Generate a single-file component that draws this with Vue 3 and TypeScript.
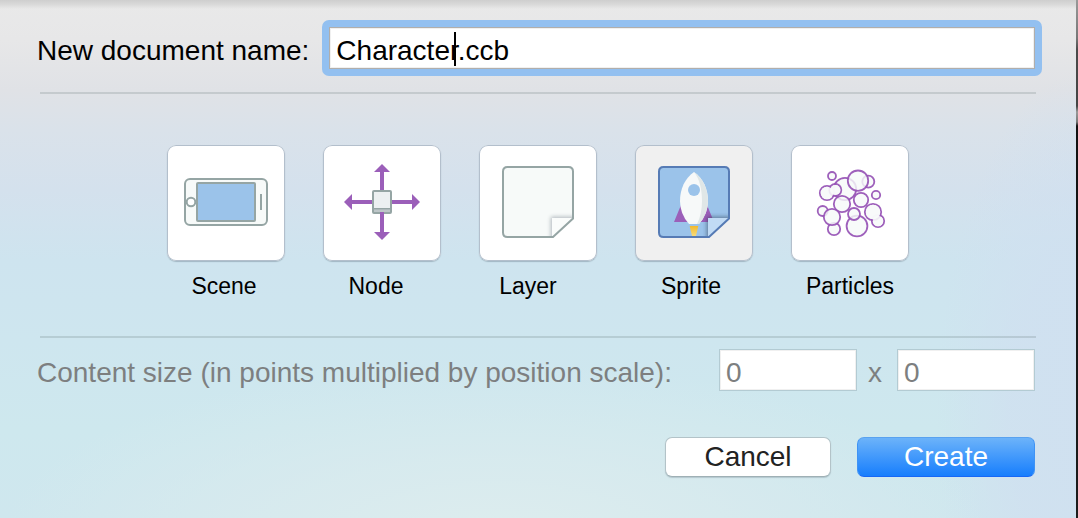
<script setup lang="ts">
import { ref } from 'vue'

interface Bubble {
  x: number
  y: number
  r: number
}

const kinds = ['Scene', 'Node', 'Layer', 'Sprite', 'Particles']
const selected = ref('Sprite')
const docName = ref('Character.ccb')
const width = ref('0')
const height = ref('0')

const bubbles: Bubble[] = [
  { x: 48, y: 36, r: 4 },
  { x: 61, y: 49, r: 11.2 },
  { x: 84.3, y: 41.7, r: 6 },
  { x: 74, y: 40.7, r: 10.2 },
  { x: 92, y: 55, r: 4.2 },
  { x: 43, y: 53, r: 7.2 },
  { x: 51.3, y: 50, r: 6 },
  { x: 77, y: 60, r: 7.2 },
  { x: 58, y: 64, r: 8.2 },
  { x: 38.7, y: 71, r: 5 },
  { x: 50, y: 89, r: 6.2 },
  { x: 48, y: 77, r: 8.2 },
  { x: 73, y: 86, r: 10.4 },
  { x: 70, y: 74, r: 6 },
  { x: 94, y: 81, r: 6.2 },
  { x: 89, y: 72, r: 8.2 },
]
const merged: Bubble[] = [
  { x: 43, y: 53, r: 6.3 },
  { x: 51.3, y: 50, r: 5.1 },
  { x: 94, y: 81, r: 5.2 },
  { x: 89, y: 72, r: 7.2 },
]
</script>

<template>
  <div class="window">
    <form class="sheet" @submit.prevent>
      <div class="row name-row">
        <label for="doc-name">New document name:</label>
        <div class="name-field">
          <input id="doc-name" v-model="docName" type="text" spellcheck="false" />
          <span class="caret"></span>
        </div>
      </div>

      <hr />

      <div class="tiles" role="radiogroup" aria-label="Document type">
        <div v-for="kind in kinds" :key="kind" class="tile" :class="{ active: selected === kind }">
          <input :id="'kind-' + kind" v-model="selected" type="radio" name="kind" :value="kind" />
          <svg viewBox="7 5 118 117" aria-hidden="true">
            <g v-if="kind === 'Scene'" stroke="#95a5a4" stroke-width="2">
              <rect x="25" y="39" width="82" height="46" rx="5" fill="#f7faf9" />
              <rect x="37" y="43" width="58" height="38" rx="1" fill="#9bc3ea" />
              <circle cx="31" cy="62" r="4.3" fill="#fff" />
              <path d="M101 54v16" fill="none" />
            </g>
            <g v-else-if="kind === 'Node'">
              <path d="M66 30v22M34 62h24M74 62h24" stroke="#9b5fb9" stroke-width="4" />
              <rect x="57" y="51" width="18" height="22" rx="1" fill="#ecf0f1" stroke="#95a5a4" stroke-width="2" />
              <rect x="58" y="69" width="16" height="3" fill="#bdc6c8" />
              <path d="M58 68.700h16" stroke="#95a5a4" stroke-width="1.400" />
              <path d="M66 72v22" stroke="#9b5fb9" stroke-width="4" />
              <path d="M66 24l8 8H58zM66 100l8-8H58zM28 62l8-8v16zM104 62l-8-8v16z" fill="#9b5fb9" />
            </g>
            <g v-else-if="kind === 'Layer' || kind === 'Sprite'">
              <defs>
                <clipPath :id="'sheet-' + kind">
                  <path d="M36 27h60q5 0 5 5v46.500L81 97H36q-5 0-5-5V32q0-5 5-5z" />
                </clipPath>
                <linearGradient id="flame" x1="0" y1="0" x2="0" y2="1">
                  <stop offset="0" stop-color="#f2b92c" />
                  <stop offset="1" stop-color="#f6dc7c" />
                </linearGradient>
                <filter :id="'soft-' + kind" x="-50%" y="-50%" width="200%" height="200%">
                  <feGaussianBlur stdDeviation="2.2" />
                </filter>
              </defs>
              <g :clip-path="'url(#sheet-' + kind + ')'">
                <rect x="30" y="26" width="72" height="72" :fill="kind === 'Layer' ? '#f7faf9' : '#9bc3ea'" />
                <g v-if="kind === 'Sprite'">
                  <path d="M53 65L46 82h15zM79 65l7 17H71z" fill="#9b5fb9" />
                  <path d="M66 32C57 38 52 49 52 61q0 13 9 23h10q9-10 9-23C80 49 75 38 66 32z" fill="#f7f9f9" />
                  <path d="M66 32c5.500 7 8 17 8 29q0 13-5 23h2q9-10 9-23C80 49 75 38 66 32z" fill="#e0e7e7" />
                  <circle cx="66" cy="50" r="6" fill="#9bc3ea" />
                  <path d="M61.700 86h8.600L68 96h-4z" fill="url(#flame)" />
                </g>
                <rect
                  x="79" y="77" width="26" height="26" fill="#25364a"
                  :opacity="kind === 'Layer' ? 0.35 : 0.55" :filter="'url(#soft-' + kind + ')'"
                />
                <rect x="80" y="78" width="26" height="26" :fill="kind === 'Layer' ? '#fafcfb' : '#c1dbf5'" />
              </g>
              <path
                d="M35.500 27h61q4.500 0 4.500 4.500v47L81 97H35.500Q31 97 31 92.500v-61Q31 27 35.500 27z" fill="none"
                :stroke="kind === 'Layer' ? '#95a5a4' : '#567bb5'" stroke-width="2"
              />
            </g>
            <g v-else>
              <circle
                v-for="(b, i) in bubbles" :key="i" :cx="b.x" :cy="b.y" :r="b.r"
                fill="#f7faf9" fill-opacity="0.82" stroke="#9653b5" stroke-opacity="0.92" stroke-width="1.8"
              />
              <circle v-for="(b, i) in merged" :key="'m' + i" :cx="b.x" :cy="b.y" :r="b.r" fill="#f7faf9" fill-opacity="0.9" />
            </g>
          </svg>
        </div>
      </div>

      <div class="captions">
        <label v-for="kind in kinds" :key="kind" :for="'kind-' + kind">{{ kind }}</label>
      </div>

      <hr />

      <div class="row size-row">
        <label for="size-w">Content size (in points multiplied by position scale):</label>
        <div class="pair">
          <input id="size-w" v-model="width" type="text" aria-label="Width" disabled />
          <span>x</span>
          <input id="size-h" v-model="height" type="text" aria-label="Height" disabled />
        </div>
      </div>

      <div class="actions">
        <button type="button" class="cancel">Cancel</button>
        <button type="submit" class="create">Create</button>
      </div>
    </form>
    <div class="edge"></div>
  </div>
</template>

<style>
body {
  margin: 0;
}
</style>

<style scoped>
.window {
  display: flex;
  min-height: 100vh;
  font-family: "Liberation Sans", Arial, sans-serif;
  font-size: 28px;
  line-height: 32px;
  color: #000;
}

.sheet {
  flex: 1;
  min-width: 0;
  box-sizing: border-box;
  padding: 27px 40px 40px;
  background:
    linear-gradient(#cecece, #d8d8d8 4px, rgba(232, 232, 232, 0) 9px),
    radial-gradient(ellipse 46% 34% at 46% 104%, rgba(222, 237, 238, 0.95), rgba(218, 235, 238, 0.7) 50%, rgba(214, 234, 238, 0)),
    radial-gradient(ellipse 14% 66% at 101% 80%, rgba(208, 224, 240, 0.95), rgba(208, 224, 240, 0.8) 50%, rgba(208, 224, 240, 0)),
    linear-gradient(#e9e9e9, #e7e7e8 40px, #e0e2e6 90px, #dae2ea 130px, #d4e1ed 190px, #cee4ef 260px, #cee6ef 340px, #cee8ee 430px, #cfe7ee);
}

.edge {
  flex: 0 0 2px;
  background: linear-gradient(#999, #777 38px, #4a4a4a 50px, #444 106px, #999 112px, #777 122px, #111 126px, #1c1c1c);
}

.row {
  display: flex;
  align-items: center;
  justify-content: space-between;
  height: 42px;
  margin-right: 1px;
  margin-left: -3px;
}

.row label,
.pair span {
  padding-top: 6px;
}

.name-row {
  gap: 13px;
}

.name-field {
  position: relative;
  flex: 1;
  margin: -7px;
  margin-left: 0;
  padding: 7px;
  border-radius: 7px;
  background: #93c0f0;
}

input[type="text"] {
  display: block;
  box-sizing: border-box;
  width: 100%;
  height: 42px;
  margin: 0;
  padding: 8px 6px 2px;
  border: 1px solid #b1aeab;
  border-radius: 0;
  outline: none;
  background: #fff;
  box-shadow: inset 0 0 0 1px #f0f0f0;
  font: inherit;
  color: inherit;
  caret-color: transparent;
}

.caret {
  position: absolute;
  top: 12px;
  left: 132px;
  width: 2px;
  height: 34px;
  background: #000;
}

hr {
  height: 2px;
  margin: 23px 0 0;
  border: 0;
  background: rgba(100, 120, 120, 0.22);
}

.tiles {
  display: flex;
  justify-content: center;
  gap: 38px;
  margin-top: 51px;
}

.tile {
  position: relative;
  box-sizing: border-box;
  width: 118px;
  height: 116px;
  border-radius: 9px;
  background: #fff;
  box-shadow: inset 0 0 0 1px #b3bfcc, 0 1px 1px rgba(80, 100, 115, 0.35);
}

.tile.active {
  background: #f0f0f0;
}

.tile input {
  position: absolute;
  inset: 0;
  width: 100%;
  height: 100%;
  margin: 0;
  opacity: 0;
}

.tile svg {
  display: block;
  width: 118px;
  height: 117px;
}

.captions {
  display: grid;
  grid-template-columns: 152px 152px 152px 174px 144px;
  justify-content: center;
  margin-top: 10px;
  padding-right: 6px;
  font-size: 23px;
  line-height: 30px;
  text-align: center;
}

.captions + hr {
  margin-top: 35px;
}

.size-row {
  margin-top: 11px;
  color: #7d7f80;
}

.pair {
  display: flex;
  align-items: center;
}

.pair input[type="text"] {
  width: 138px;
  border-color: #b3cbd3;
}

.pair span {
  width: 40px;
  padding-right: 4px;
  box-sizing: border-box;
  text-align: center;
}

.actions {
  display: flex;
  justify-content: flex-end;
  gap: 26px;
  margin: 46px 1px 0 0;
}

button {
  height: 40px;
  padding: 0;
  border: 1px solid #b3c3c8;
  border-radius: 7px;
  font: inherit;
  line-height: 38px;
}

.cancel {
  width: 166px;
  border-bottom-color: #9fb0b5;
  background: #fff;
  box-shadow: 0 1px 1px rgba(80, 100, 110, 0.25);
  color: #222;
}

.create {
  width: 178px;
  border-color: #5aa2ef #3f93f5 #1767f5;
  background: linear-gradient(#6cb3fa, #177efd);
  color: #fff;
}
</style>
